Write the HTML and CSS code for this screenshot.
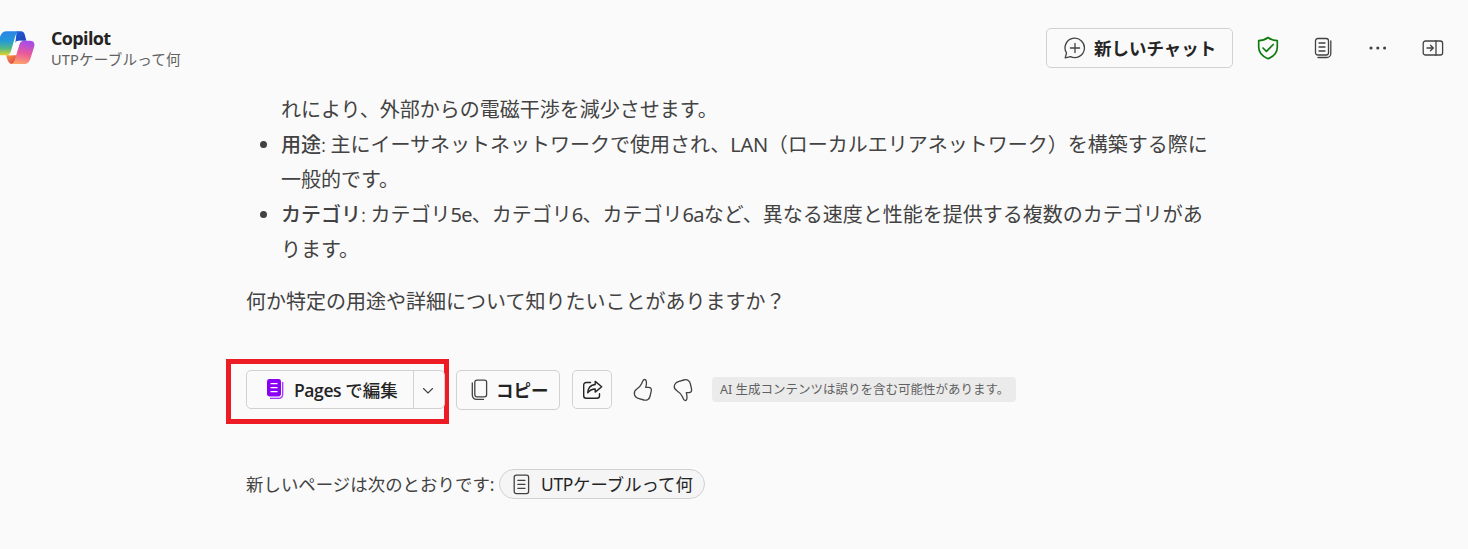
FILE: index.html
```html
<!DOCTYPE html>
<html lang="ja">
<head>
<meta charset="utf-8">
<title>Copilot</title>
<link rel="stylesheet" href="styles.css">
</head>
<body>
<header class="header">
  <svg class="logo" width="36" height="40" viewBox="0 0 108 120">
    <defs>
      <linearGradient id="blue" x1="0" y1="0" x2="0" y2="1"><stop offset="0" stop-color="#2b83e8"/><stop offset=".4" stop-color="#2499d5"/><stop offset=".72" stop-color="#55b985"/><stop offset="1" stop-color="#e8d527"/></linearGradient>
      <linearGradient id="navy" x1="0" y1="0" x2="1" y2="1"><stop offset="0" stop-color="#1d62dc"/><stop offset="1" stop-color="#223dad"/></linearGradient>
      <linearGradient id="pink" x1=".4" y1="0" x2=".2" y2="1"><stop offset="0" stop-color="#a64ce8"/><stop offset=".5" stop-color="#ea5a9b"/><stop offset="1" stop-color="#ffa967"/></linearGradient>
      <linearGradient id="red" x1="0" y1="0" x2="1" y2="1"><stop offset="0" stop-color="#f59d3b"/><stop offset="1" stop-color="#d93550"/></linearGradient>
    </defs>
    <path fill="url(#navy)" d="M50 16H63Q71 16 74 25L79 44H60Q49 44 46 52Z"/>
    <path fill="url(#red)" d="M18 88H52L46 106Q43 114 36 114 27 114 23 103Z"/>
    <path fill="url(#blue)" d="M0 32Q6 16 20 16H60Q50 17 45 33L33 75Q29 88 19 88H0Z"/>
    <path fill="url(#pink)" d="M68 44H91Q107 44 102 64L91 99Q86 114 73 114H34Q41 112 45 100L58 56Q61 44 74 44Z"/>
    <path fill="#fafafa" d="M65 44H56Q47 44 44 54L35 79Q32 88 27 88H35Q45 88 49 78L57 53Q60 45 65 44Z"/>
  </svg>
  <div class="heading"><h1 class="title">Copilot</h1><div class="subtitle">UTPケーブルって何</div></div>
  <button class="button new-chat">
    <svg class="icon" width="22" height="22" viewBox="0 0 22 22"><path d="M1.2 20.8 2.5 16A9.7 9.7 0 1 1 6.5 19.6ZM11 6.4v9.2M6.4 11h9.2"/></svg>
    <span>新しいチャット</span>
  </button>
  <svg class="icon shield" width="22" height="24" viewBox="0 0 22 24"><path d="M11 1.5Q15 4.6 20.3 4.6V11C20.3 17 16.5 20.5 11 22.7 5.5 20.5 1.7 17 1.7 11V4.6Q7 4.6 11 1.5ZM6 12l3.4 3.4L16.2 8.5"/></svg>
  <svg class="icon pages" width="18" height="22" viewBox="0 0 18 22"><rect x="1.5" y="1.5" width="13" height="16.5" rx="2.3"/><path d="M5 6h6M5 10h6M5 14h6M16.8 4v12.5a4 4 0 0 1-4 4H4"/></svg>
  <svg class="more" width="18" height="4" viewBox="0 0 18 4"><circle cx="2" cy="2" r="1.55"/><circle cx="8.8" cy="2" r="1.55"/><circle cx="15.6" cy="2" r="1.55"/></svg>
  <svg class="icon panel" width="22" height="16" viewBox="0 0 22 16"><rect x="1.2" y="1" width="19.4" height="14" rx="2.3"/><path d="M14 1v14M5 8h6M8.5 5.2 11.3 8 8.5 10.8"/></svg>
</header>
<main class="main">
  <ul class="list">
    <li class="continued">れにより、外部からの電磁干渉を減少させます。</li>
    <li><strong>用途</strong><span class="colon">: </span>主にイーサネットネットワークで使用され、<span class="lan">LAN</span>（ローカルエリアネットワーク）を構築する際に<br>一般的です。</li>
    <li><strong>カテゴリ</strong><span class="colon">: </span>カテゴリ<span class="grade">5e</span>、カテゴリ<span class="grade">6</span>、カテゴリ<span class="grade">6a</span>など、異なる速度と性能を提供する複数のカテゴリがあ<br>ります。</li>
  </ul>
  <p class="question">何か特定の用途や詳細について知りたいことがありますか？</p>
  <div class="actions">
    <div class="highlight">
      <div class="split">
        <button class="edit">
          <svg width="18" height="22" viewBox="0 0 18 22"><rect x="1" y="1" width="14" height="17.4" rx="2.4" fill="#8a00f5"/><path d="M4.5 5.7h7M4.5 9.7h7M4.5 13.7h7" stroke="#fff" stroke-width="1.3"/><path d="M16.7 4v12.5a3.8 3.8 0 0 1-3.8 3.8H4" fill="none" stroke="#a233ff" stroke-width="1.3"/></svg>
          <span><span class="latin">Pages</span> で編集</span>
        </button>
        <button class="chevron"><svg class="icon" width="12" height="8" viewBox="0 0 12 8"><path d="m1.5 1.5 4.5 4.5 4.5-4.5"/></svg></button>
      </div>
    </div>
    <button class="button copy">
      <svg class="icon" width="17" height="22" viewBox="0 0 17 22"><rect x="3.8" y="1.2" width="11.8" height="16.6" rx="2.1"/><path d="M1.3 4v12.2a4.2 4.2 0 0 0 4.2 4.2h7"/></svg>
      <span>コピー</span>
    </button>
    <button class="button share"><svg class="icon" width="22" height="20" viewBox="0 0 22 20"><path d="M8.5 2.5H4.2A2.5 2.5 0 0 0 1.7 5v10.8a2.5 2.5 0 0 0 2.5 2.5H15a2.5 2.5 0 0 0 2.5-2.5v-2M13.2 1.4l6.5 5.4-6.5 5.3V9C9.8 9 7.9 10 5.7 12.8 6.1 7.6 9.2 4.8 13.2 4.5Z"/></svg></button>
    <svg class="icon thumb-up" width="20" height="24" viewBox="0 0 20 24"><path d="M11.4 1.5C10 1.5 9.6 3.5 8.7 5.5 7.5 8.2 6 9.7 3.6 11.3 1.5 12.7 1.1 14.1 1.4 16.1 1.8 18.6 3.4 19.9 6.1 20.7L10.8 22C14.2 22.8 16.4 21.1 17.1 18L18.2 13.2C18.8 10.8 17.8 9.4 15.5 9.4H12.7C13.4 7 13.8 5.1 13.3 3.2 13 2 12.4 1.4 11.4 1.5Z"/></svg>
    <svg class="icon thumb-down" width="20" height="24" viewBox="0 0 20 24"><path d="M12 22.5C10.6 22.5 10.2 20.5 9.3 18.5 8.1 15.8 6.4 14.3 3.9 12.7 1.8 11.3.9 9.8 1.3 7.9 1.7 5.4 3.3 4.1 6.1 3.3L10.8 2C14.6.9 16.7 2.9 17.4 6L18.5 10.8C19 13.2 18.1 14.6 15.8 14.6H13.3C14 17 14.4 18.9 13.9 20.8 13.6 22 13 22.6 12 22.5Z"/></svg>
    <div class="notice">AI 生成コンテンツは誤りを含む可能性があります。</div>
  </div>
  <div class="result"><span>新しいページは次のとおりです:</span>
    <a class="chip"><svg class="icon" width="17" height="21" viewBox="0 0 17 21"><rect x="1.2" y="1.2" width="14.4" height="18.4" rx="2"/><path d="M4.8 6.3h7.2M4.8 10.3h7.2M4.8 14.3h7.2"/></svg><span><span class="utp">UTP</span>ケーブルって何</span></a>
  </div>
</main>
</body>
</html>
```
FILE: styles.css
```css
* { box-sizing: border-box; }
body { margin: 0; height: 549px; overflow: hidden; background: #fafafa; color: #424242; font-family: "Noto Sans", "Noto Sans CJK JP", sans-serif; font-size: 20px; white-space: nowrap; }
button { margin: 0; padding: 0; border: 0; background: none; font: inherit; color: #242424; }
svg { display: block; flex: none; }
.icon { fill: none; stroke: #424242; stroke-width: 1.3; stroke-linejoin: round; stroke-linecap: round; }
.button { display: flex; align-items: center; border: 1px solid #d1d1d1; border-radius: 5px; }
.header { display: flex; align-items: center; height: 91px; }
.heading { width: 995px; margin: 6px 0 0 15px; }
.title { margin: 0; color: #242424; font-family: "Open Sans", sans-serif; font-size: 18px; line-height: 23px; font-weight: 700; letter-spacing: -.65px; }
.subtitle { font-size: 14.6px; line-height: 21px; color: #616161; letter-spacing: .15px; margin-top: -1px; }
.new-chat { width: 187px; height: 40px; padding: 0 0 1px 17px; gap: 8px; margin-top: 5px; font-size: 17.5px; font-weight: 700; }
.shield { margin: 4px 0 0 24px; stroke: #107c10; stroke-width: 1.7; }
.pages { margin: 4px 0 0 35px; }
.more { margin: 4px 0 0 37px; fill: #424242; }
.panel { margin: 4px 0 0 35px; }
.main { padding-left: 246px; }
.list { margin: 0; padding-left: 35px; line-height: 35px; font-family: "Noto Sans CJK JP", sans-serif; }
.list li { height: 70px; }
.list .continued { height: 35px; list-style: none; }
.list li::marker { font-family: "Noto Sans", sans-serif; }
.list strong { font-weight: 500; }
.colon { font-weight: 300; }
.lan { font-family: "Noto Sans", sans-serif; letter-spacing: -.3px; line-height: 1; }
.grade { font-family: "Noto Sans", sans-serif; letter-spacing: -.7px; line-height: 1; }
.question { margin: 17px 0 0; line-height: 35px; font-family: "Noto Sans CJK JP", sans-serif; }
.actions { display: flex; align-items: center; height: 65px; margin: 41px 0 0 -20px; }
.highlight { width: 223px; height: 65px; padding: 6px 0 0 15px; border: 5px solid #ed1c24; }
.split { display: flex; width: 199px; height: 39px; border: 1px solid #d1d1d1; border-radius: 5px; }
.edit { display: flex; align-items: center; width: 167px; padding: 0 0 1px 19px; gap: 10px; border-right: 1px solid #d1d1d1; font-size: 17.5px; font-weight: 500; font-family: "Noto Sans CJK JP", sans-serif; }
.latin { font-family: "Open Sans", sans-serif; font-weight: 600; letter-spacing: -.4px; }
.chevron { display: flex; align-items: center; padding: 2px 0 0 8px; }
.chevron .icon { stroke-width: 1.1; }
.copy { width: 104px; height: 40px; margin: -3px 0 0 7px; padding: 0 0 1px 14px; gap: 8px; font-size: 17.5px; font-weight: 700; }
.share { width: 40px; height: 39px; margin: -4px 0 0 12px; padding-left: 9px; }
.share .icon { stroke: #242424; stroke-width: 1.4; }
.thumb-up { margin: -4px 0 0 21px; }
.thumb-down { margin: -4px 0 0 20px; }
.notice { width: 304px; height: 25px; margin: -4px 0 0 19px; padding-left: 8px; border-radius: 4px; background: #ebebeb; color: #616161; font-size: 12.5px; line-height: 25px; }
.result { display: flex; align-items: center; height: 30px; margin-top: 45px; font-size: 17.4px; }
.result > span { width: 253px; margin-top: -2px; letter-spacing: .05px; }
.chip { display: flex; align-items: center; width: 206px; height: 30px; padding: 0 0 0 13px; gap: 11px; border: 1px solid #d1d1d1; border-radius: 15px; background: #f5f5f5; color: #242424; }
.chip > span { margin-top: -2px; }
.utp { letter-spacing: -.3px; }
```
